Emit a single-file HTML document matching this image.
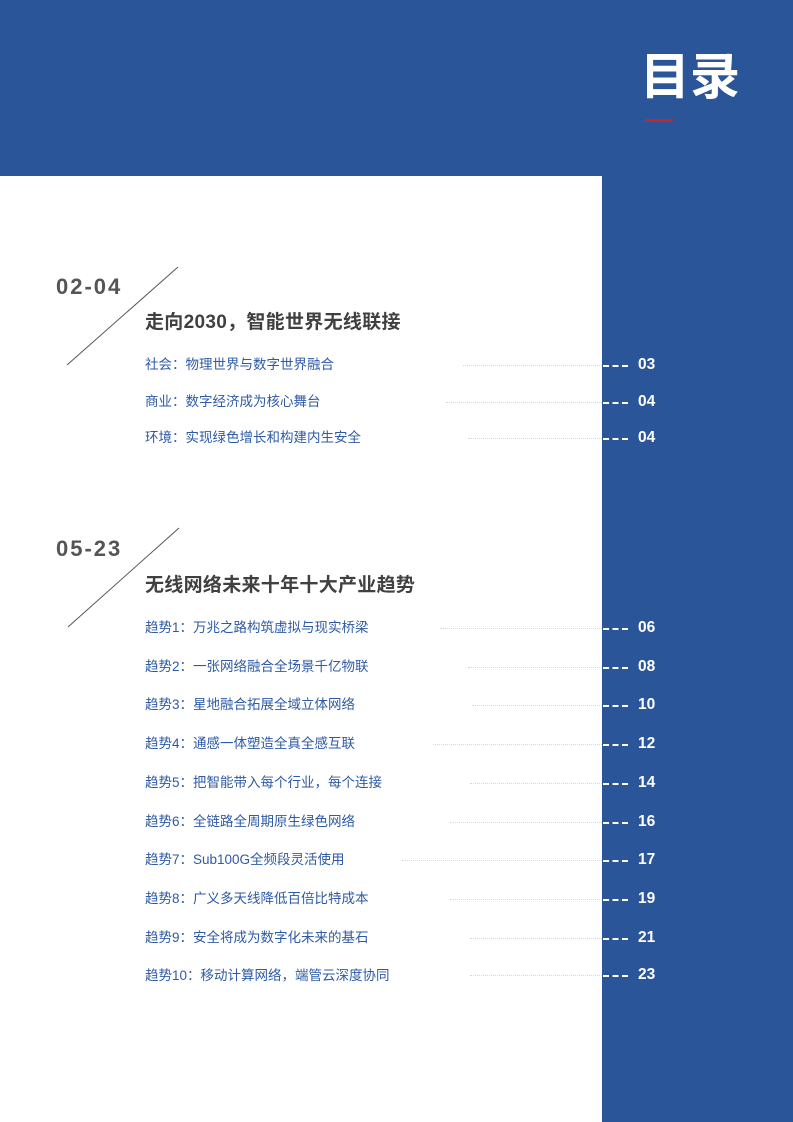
<!DOCTYPE html>
<html><head><meta charset="utf-8"><style>
*{margin:0;padding:0}
body{width:793px;height:1122px;position:relative;background:#fff;overflow:hidden;font-family:"Liberation Sans","Noto Sans CJK SC",sans-serif}
.top{position:absolute;left:0;top:0;width:793px;height:176px;background:#2a5699}
.col{position:absolute;left:602px;top:176px;width:191px;height:946px;background:#2a5699}
.title{position:absolute;left:640px;top:46px;font-size:50px;font-weight:bold;color:#fff;letter-spacing:0px;line-height:62px}
.red{position:absolute;left:645px;top:119px;width:28px;height:3px;background:#c8242b}
.rng{position:absolute;left:56px;font-size:22px;font-weight:bold;color:#555;letter-spacing:2px;line-height:24px}
.h{position:absolute;left:145px;font-size:19px;font-weight:bold;color:#404040;line-height:24px;letter-spacing:0.3px}
.it{position:absolute;left:145px;font-size:13.5px;color:#2e5aa6;line-height:18px}
.d1{position:absolute;height:0;border-top:1px dotted #d8d8d8}
.d2{position:absolute;left:603px;width:25px;height:0;border-top:2px dashed #fff}
.n{position:absolute;left:638px;font-size:15.5px;font-weight:bold;color:#fff;line-height:18px}
svg{position:absolute;left:0;top:0}
</style></head><body>
<div class="top"></div><div class="col"></div>
<div class="title">目录</div><div class="red"></div>
<svg width="793" height="1122"><line x1="67" y1="365" x2="178" y2="267" stroke="#555" stroke-width="1"/><line x1="68" y1="627" x2="179" y2="528" stroke="#555" stroke-width="1"/></svg>
<div class="rng" style="top:275px">02-04</div>
<div class="h" style="top:311px">走向2030，智能世界无线联接</div>
<div class="rng" style="top:537px">05-23</div>
<div class="h" style="top:574px">无线网络未来十年十大产业趋势</div>

<div class="it" style="top:356px">社会：物理世界与数字世界融合</div><div class="d1" style="left:463px;width:139px;top:365px"></div><div class="d2" style="top:365px"></div><div class="n" style="top:356px">03</div>
<div class="it" style="top:393px">商业：数字经济成为核心舞台</div><div class="d1" style="left:446px;width:156px;top:402px"></div><div class="d2" style="top:402px"></div><div class="n" style="top:393px">04</div>
<div class="it" style="top:429px">环境：实现绿色增长和构建内生安全</div><div class="d1" style="left:468px;width:134px;top:438px"></div><div class="d2" style="top:438px"></div><div class="n" style="top:429px">04</div>

<div class="it" style="top:619px">趋势1：万兆之路构筑虚拟与现实桥梁</div><div class="d1" style="left:440px;width:162px;top:628px"></div><div class="d2" style="top:628px"></div><div class="n" style="top:619px">06</div>
<div class="it" style="top:658px">趋势2：一张网络融合全场景千亿物联</div><div class="d1" style="left:468px;width:134px;top:667px"></div><div class="d2" style="top:667px"></div><div class="n" style="top:658px">08</div>
<div class="it" style="top:696px">趋势3：星地融合拓展全域立体网络</div><div class="d1" style="left:472px;width:130px;top:705px"></div><div class="d2" style="top:705px"></div><div class="n" style="top:696px">10</div>
<div class="it" style="top:735px">趋势4：通感一体塑造全真全感互联</div><div class="d1" style="left:433px;width:169px;top:744px"></div><div class="d2" style="top:744px"></div><div class="n" style="top:735px">12</div>
<div class="it" style="top:774px">趋势5：把智能带入每个行业，每个连接</div><div class="d1" style="left:470px;width:132px;top:783px"></div><div class="d2" style="top:783px"></div><div class="n" style="top:774px">14</div>
<div class="it" style="top:813px">趋势6：全链路全周期原生绿色网络</div><div class="d1" style="left:450px;width:152px;top:822px"></div><div class="d2" style="top:822px"></div><div class="n" style="top:813px">16</div>
<div class="it" style="top:851px">趋势7：Sub100G全频段灵活使用</div><div class="d1" style="left:402px;width:200px;top:860px"></div><div class="d2" style="top:860px"></div><div class="n" style="top:851px">17</div>
<div class="it" style="top:890px">趋势8：广义多天线降低百倍比特成本</div><div class="d1" style="left:450px;width:152px;top:899px"></div><div class="d2" style="top:899px"></div><div class="n" style="top:890px">19</div>
<div class="it" style="top:929px">趋势9：安全将成为数字化未来的基石</div><div class="d1" style="left:470px;width:132px;top:938px"></div><div class="d2" style="top:938px"></div><div class="n" style="top:929px">21</div>
<div class="it" style="top:967px">趋势10：移动计算网络，端管云深度协同</div><div class="d1" style="left:470px;width:132px;top:975px"></div><div class="d2" style="top:975px"></div><div class="n" style="top:966px">23</div>
</body></html>
